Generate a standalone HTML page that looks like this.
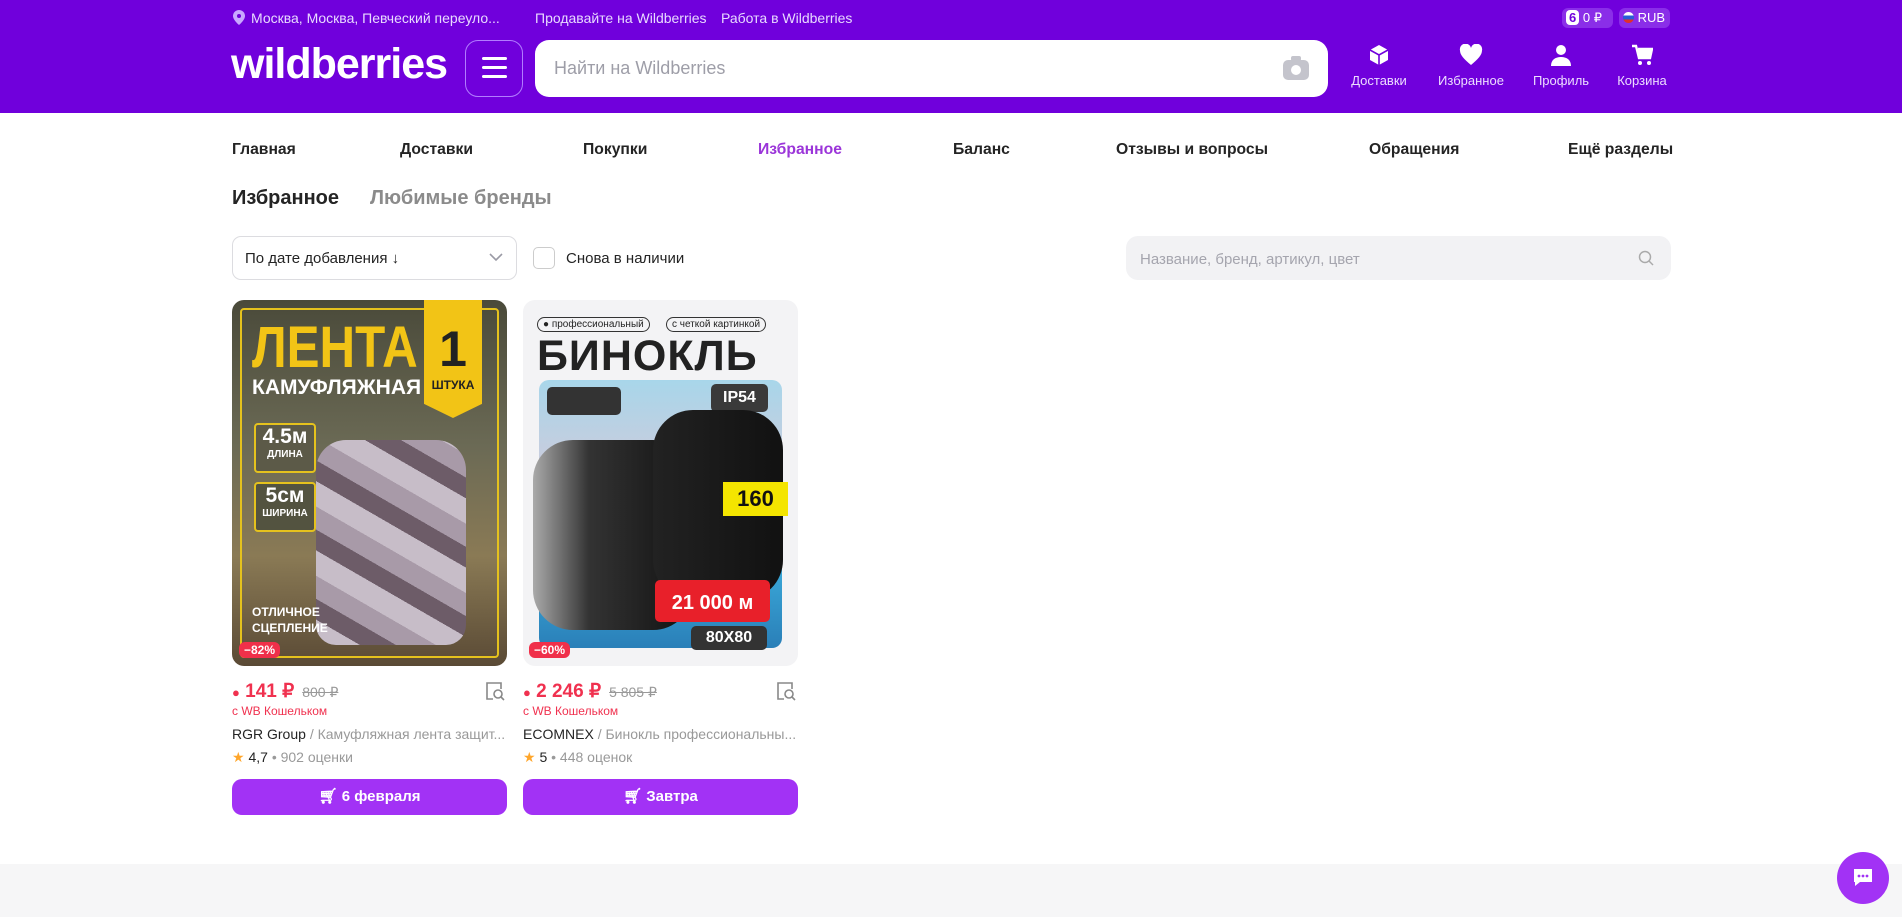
<!DOCTYPE html>
<html><head><meta charset="utf-8"><style>
*{box-sizing:border-box;margin:0;padding:0}
body{width:1902px;height:917px;overflow:hidden;background:#fff;font-family:"Liberation Sans",sans-serif;color:#242424;position:relative}
.a{position:absolute}
.hdr{left:0;top:0;width:1902px;height:113px;background:#7000dc}
.top{color:#e8d9ff;font-size:14px;top:10px}
.ic{color:#fff;font-size:13px;text-align:center;width:80px;top:44px}
.ic span{display:block;margin-top:4px;color:#eddcff}
.nav{top:141px;font-size:15.7px;font-weight:bold}
.price{font-size:19px;font-weight:bold;color:#f0314f}
.old{font-size:14px;color:#999;text-decoration:line-through;font-weight:normal;margin-left:8px}
.btn{height:36px;width:275px;background:#a232f5;border-radius:10px;color:#fff;font-weight:bold;font-size:15px;text-align:center;line-height:36px;top:779px}
.disc{background:#f0304a;color:#fff;font-size:12px;font-weight:bold;border-radius:6px;padding:1px 5px;top:642px}
</style></head><body>
<div class="a hdr"></div>
<svg class="a" style="left:233px;top:10px" width="12" height="15" viewBox="0 0 12 15"><path d="M6 0a6 6 0 0 0-6 6c0 4 6 9 6 9s6-5 6-9a6 6 0 0 0-6-6z" fill="#c9a8ff"/><circle cx="6" cy="6" r="2" fill="#7000dc"/></svg>
<div class="a top" style="left:251px">Москва, Москва, Певческий переуло...</div>
<div class="a top" style="left:535px">Продавайте на Wildberries</div>
<div class="a top" style="left:721px">Работа в Wildberries</div>
<div class="a" style="left:1562px;top:8px;width:51px;height:20px;background:#8a2ee8;border-radius:6px;color:#fff;font-size:13px;line-height:20px;padding-left:4px"><span style="background:#fff;color:#7000dc;border-radius:4px;padding:0 3px;font-weight:bold">6</span> 0 ₽</div>
<div class="a" style="left:1619px;top:8px;width:51px;height:20px;background:#8a2ee8;border-radius:6px;color:#fff;font-size:13px;line-height:20px;padding-left:4px"><span style="display:inline-block;width:11px;height:11px;border-radius:50%;background:linear-gradient(#fff 33%,#2a5bd7 33%,#2a5bd7 66%,#e0302a 66%);vertical-align:-1px"></span> RUB</div>
<div class="a" style="left:231px;top:40px;font-size:43px;font-weight:bold;color:#fff;letter-spacing:-1px">wildberries</div>
<div class="a" style="left:465px;top:40px;width:58px;height:57px;border:1px solid #b27cff;border-radius:13px"></div>
<div class="a" style="left:482px;top:57px;width:25px;height:3px;background:#fff;box-shadow:0 9px 0 #fff,0 18px 0 #fff;border-radius:2px"></div>
<div class="a" style="left:535px;top:40px;width:793px;height:57px;background:#fff;border-radius:14px"></div>
<div class="a" style="left:554px;top:58px;font-size:18px;color:#9e9ea8">Найти на Wildberries</div>
<svg class="a" style="left:1283px;top:56px" width="26" height="24" viewBox="0 0 26 24"><rect x="8" y="0" width="10" height="5" rx="2" fill="#c4c4cc"/><rect x="0" y="4" width="26" height="20" rx="5" fill="#c4c4cc"/><circle cx="13" cy="14" r="5" fill="#fff"/></svg>
<div class="a ic" style="left:1339px"><svg width="22" height="22" viewBox="0 0 22 22"><path d="M11 1L20 6V16L11 21L2 16V6Z" fill="#fff"/><path d="M2 6L11 11L20 6M11 11V21" stroke="#7000dc" stroke-width="1.6" fill="none"/></svg><span>Доставки</span></div>
<div class="a ic" style="left:1431px"><svg width="24" height="22" viewBox="0 0 24 22"><path d="M12 21C5 15 1 11 1 6.5A5.5 5.5 0 0 1 12 4a5.5 5.5 0 0 1 11 2.5C23 11 19 15 12 21z" fill="#fff"/></svg><span>Избранное</span></div>
<div class="a ic" style="left:1521px"><svg width="22" height="22" viewBox="0 0 22 22"><circle cx="11" cy="6" r="5" fill="#fff"/><path d="M1 22c0-6 4-9 10-9s10 3 10 9z" fill="#fff"/></svg><span>Профиль</span></div>
<div class="a ic" style="left:1602px"><svg width="22" height="22" viewBox="0 0 22 22"><path d="M1 2h4l3 12h11l2-9H7" stroke="#fff" stroke-width="2.4" fill="none"/><path d="M7 6h14l-2 8H8z" fill="#fff"/><circle cx="9" cy="19" r="2" fill="#fff"/><circle cx="18" cy="19" r="2" fill="#fff"/></svg><span>Корзина</span></div>

<div class="a nav" style="left:232px">Главная</div>
<div class="a nav" style="left:400px">Доставки</div>
<div class="a nav" style="left:583px">Покупки</div>
<div class="a nav" style="left:758px;color:#9b35d9">Избранное</div>
<div class="a nav" style="left:953px">Баланс</div>
<div class="a nav" style="left:1116px">Отзывы и вопросы</div>
<div class="a nav" style="left:1369px">Обращения</div>
<div class="a nav" style="left:1568px">Ещё разделы</div>

<div class="a" style="left:232px;top:187px;font-size:20px;font-weight:bold">Избранное</div>
<div class="a" style="left:370px;top:187px;font-size:20px;font-weight:bold;color:#8b8b8b">Любимые бренды</div>

<div class="a" style="left:232px;top:236px;width:285px;height:44px;border:1px solid #dcdce0;border-radius:9px"></div>
<div class="a" style="left:245px;top:250px;font-size:15px">По дате добавления ↓</div>
<svg class="a" style="left:489px;top:253px" width="14" height="9" viewBox="0 0 14 9"><path d="M1 1l6 6 6-6" stroke="#9a9aa5" stroke-width="1.6" fill="none"/></svg>
<div class="a" style="left:533px;top:247px;width:22px;height:22px;border:1px solid #ccc;border-radius:5px"></div>
<div class="a" style="left:566px;top:250px;font-size:15px">Снова в наличии</div>
<div class="a" style="left:1126px;top:236px;width:545px;height:44px;background:#f2f2f4;border-radius:12px"></div>
<div class="a" style="left:1140px;top:251px;font-size:15px;color:#a5a5ae">Название, бренд, артикул, цвет</div>
<svg class="a" style="left:1638px;top:250px" width="16" height="16" viewBox="0 0 16 16"><circle cx="7" cy="7" r="5.5" stroke="#aaa" stroke-width="1.5" fill="none"/><path d="M11 11l4 4" stroke="#aaa" stroke-width="1.5"/></svg>

<div class="a" style="left:232px;top:300px;width:275px;height:366px;border-radius:12px;overflow:hidden;background:linear-gradient(#4a4a3a,#6b6a55 40%,#8a7a55 70%,#5a4a35)">
 <div class="a" style="left:8px;top:8px;width:259px;height:350px;border:2px solid #e5c21d;border-radius:4px"></div>
 <div class="a" style="left:20px;top:14px;font-size:58px;font-weight:bold;color:#f2c416;transform:scaleX(.85);transform-origin:left">ЛЕНТА</div>
 <div class="a" style="left:20px;top:76px;font-size:21px;font-weight:bold;color:#fff">КАМУФЛЯЖНАЯ</div>
 <div class="a" style="left:192px;top:0;width:58px;height:118px;background:#f2c416;clip-path:polygon(0 0,100% 0,100% 88%,50% 100%,0 88%);text-align:center;color:#222;font-weight:bold"><div style="font-size:50px;margin-top:20px">1</div><div style="font-size:12px">ШТУКА</div></div>
 <div class="a" style="left:22px;top:123px;width:62px;height:50px;border:2px solid #e5c21d;border-radius:4px;background:#5c5a48;color:#fff;text-align:center;font-weight:bold"><div style="font-size:21px">4.5м</div><div style="font-size:10px">ДЛИНА</div></div>
 <div class="a" style="left:22px;top:182px;width:62px;height:50px;border:2px solid #e5c21d;border-radius:4px;background:#535340;color:#fff;text-align:center;font-weight:bold"><div style="font-size:21px">5см</div><div style="font-size:10px">ШИРИНА</div></div>
 <div class="a" style="left:84px;top:140px;width:150px;height:205px;border-radius:30px 30px 20px 20px;background:repeating-linear-gradient(30deg,#c7bdc8 0 22px,#6d5c68 22px 40px,#a89aa8 40px 60px)"></div>
 <div class="a" style="left:20px;top:304px;font-size:12px;font-weight:bold;color:#fff;line-height:16px">ОТЛИЧНОЕ<br>СЦЕПЛЕНИЕ</div>
</div>
<div class="a disc" style="left:239px">−82%</div>
<div class="a" style="left:523px;top:300px;width:275px;height:366px;border-radius:12px;overflow:hidden;background:#f3f3f5">
 <div class="a" style="left:14px;top:17px;font-size:10px;border:1px solid #333;border-radius:8px;padding:1px 5px">● профессиональный</div>
 <div class="a" style="left:143px;top:17px;font-size:10px;border:1px solid #333;border-radius:8px;padding:1px 5px">с четкой картинкой</div>
 <div class="a" style="left:14px;top:32px;font-size:43px;font-weight:bold;color:#222;letter-spacing:1px">БИНОКЛЬ</div>
 <div class="a" style="left:16px;top:80px;width:243px;height:268px;border-radius:10px;background:linear-gradient(#a8d6ea,#d8c8d8 45%,#3aa8d8 70%,#2a7fb8)"></div>
 <div class="a" style="left:24px;top:87px;width:74px;height:28px;background:#333;border-radius:5px"></div>
 <div class="a" style="left:188px;top:84px;width:57px;height:28px;background:#3a3a3a;border-radius:5px;color:#fff;font-weight:bold;font-size:16px;text-align:center;line-height:28px">IP54</div>
 <div class="a" style="left:10px;top:140px;width:160px;height:190px;border-radius:40px;background:linear-gradient(90deg,#aaa,#333 35%,#111)"></div>
 <div class="a" style="left:130px;top:110px;width:130px;height:190px;border-radius:40px;background:linear-gradient(90deg,#222,#111)"></div>
 <div class="a" style="left:200px;top:182px;width:65px;height:34px;background:#f4e500;color:#111;font-weight:bold;font-size:22px;text-align:center;line-height:34px">160</div>
 <div class="a" style="left:132px;top:280px;width:115px;height:42px;background:#e8202a;border-radius:5px;color:#fff;font-weight:bold;font-size:20px;text-align:center;padding-top:12px">21 000 м</div>
 <div class="a" style="left:168px;top:326px;width:76px;height:24px;background:#333;border-radius:5px;color:#fff;font-weight:bold;font-size:16px;text-align:center;line-height:24px">80X80</div>
</div>
<div class="a disc" style="left:529px">−60%</div>

<div class="a price" style="left:232px;top:680px"><span style="font-size:13px">●</span> 141 ₽<span class="old">800 ₽</span></div>
<div class="a price" style="left:523px;top:680px"><span style="font-size:13px">●</span> 2 246 ₽<span class="old">5 805 ₽</span></div>
<svg class="a" style="left:484px;top:680px" width="22" height="22" viewBox="0 0 22 22"><path d="M9 19H3V3h14v6" stroke="#888" stroke-width="1.6" fill="none"/><circle cx="14" cy="14" r="4" stroke="#888" stroke-width="1.6" fill="none"/><path d="M17 17l3 3" stroke="#888" stroke-width="1.6"/></svg>
<svg class="a" style="left:775px;top:680px" width="22" height="22" viewBox="0 0 22 22"><path d="M9 19H3V3h14v6" stroke="#888" stroke-width="1.6" fill="none"/><circle cx="14" cy="14" r="4" stroke="#888" stroke-width="1.6" fill="none"/><path d="M17 17l3 3" stroke="#888" stroke-width="1.6"/></svg>
<div class="a" style="left:232px;top:704px;font-size:12px;color:#f0314f">с WB Кошельком</div>
<div class="a" style="left:523px;top:704px;font-size:12px;color:#f0314f">с WB Кошельком</div>
<div class="a" style="left:232px;top:726px;font-size:14px;width:275px;white-space:nowrap;overflow:hidden">RGR Group <span style="color:#999">/ Камуфляжная лента защит...</span></div>
<div class="a" style="left:523px;top:726px;font-size:14px;width:275px;white-space:nowrap;overflow:hidden">ECOMNEX <span style="color:#999">/ Бинокль профессиональны...</span></div>
<div class="a" style="left:232px;top:749px;font-size:14px"><span style="color:#ffa62b">★</span> 4,7 <span style="color:#999">• 902 оценки</span></div>
<div class="a" style="left:523px;top:749px;font-size:14px"><span style="color:#ffa62b">★</span> 5 <span style="color:#999">• 448 оценок</span></div>
<div class="a btn" style="left:232px">🛒︎ 6 февраля</div>
<div class="a btn" style="left:523px">🛒︎ Завтра</div>

<div class="a" style="left:0;top:864px;width:1902px;height:53px;background:#f6f6f7"></div>
<div class="a" style="left:1837px;top:852px;width:52px;height:52px;border-radius:50%;background:#a232f5"></div>
<svg class="a" style="left:1851px;top:866px" width="24" height="24" viewBox="0 0 24 24"><path d="M3 3h18v13H9l-5 4v-4H3z" fill="#fff"/><circle cx="8" cy="10" r="1.4" fill="#a232f5"/><circle cx="12" cy="10" r="1.4" fill="#a232f5"/><circle cx="16" cy="10" r="1.4" fill="#a232f5"/></svg>
</body></html>
